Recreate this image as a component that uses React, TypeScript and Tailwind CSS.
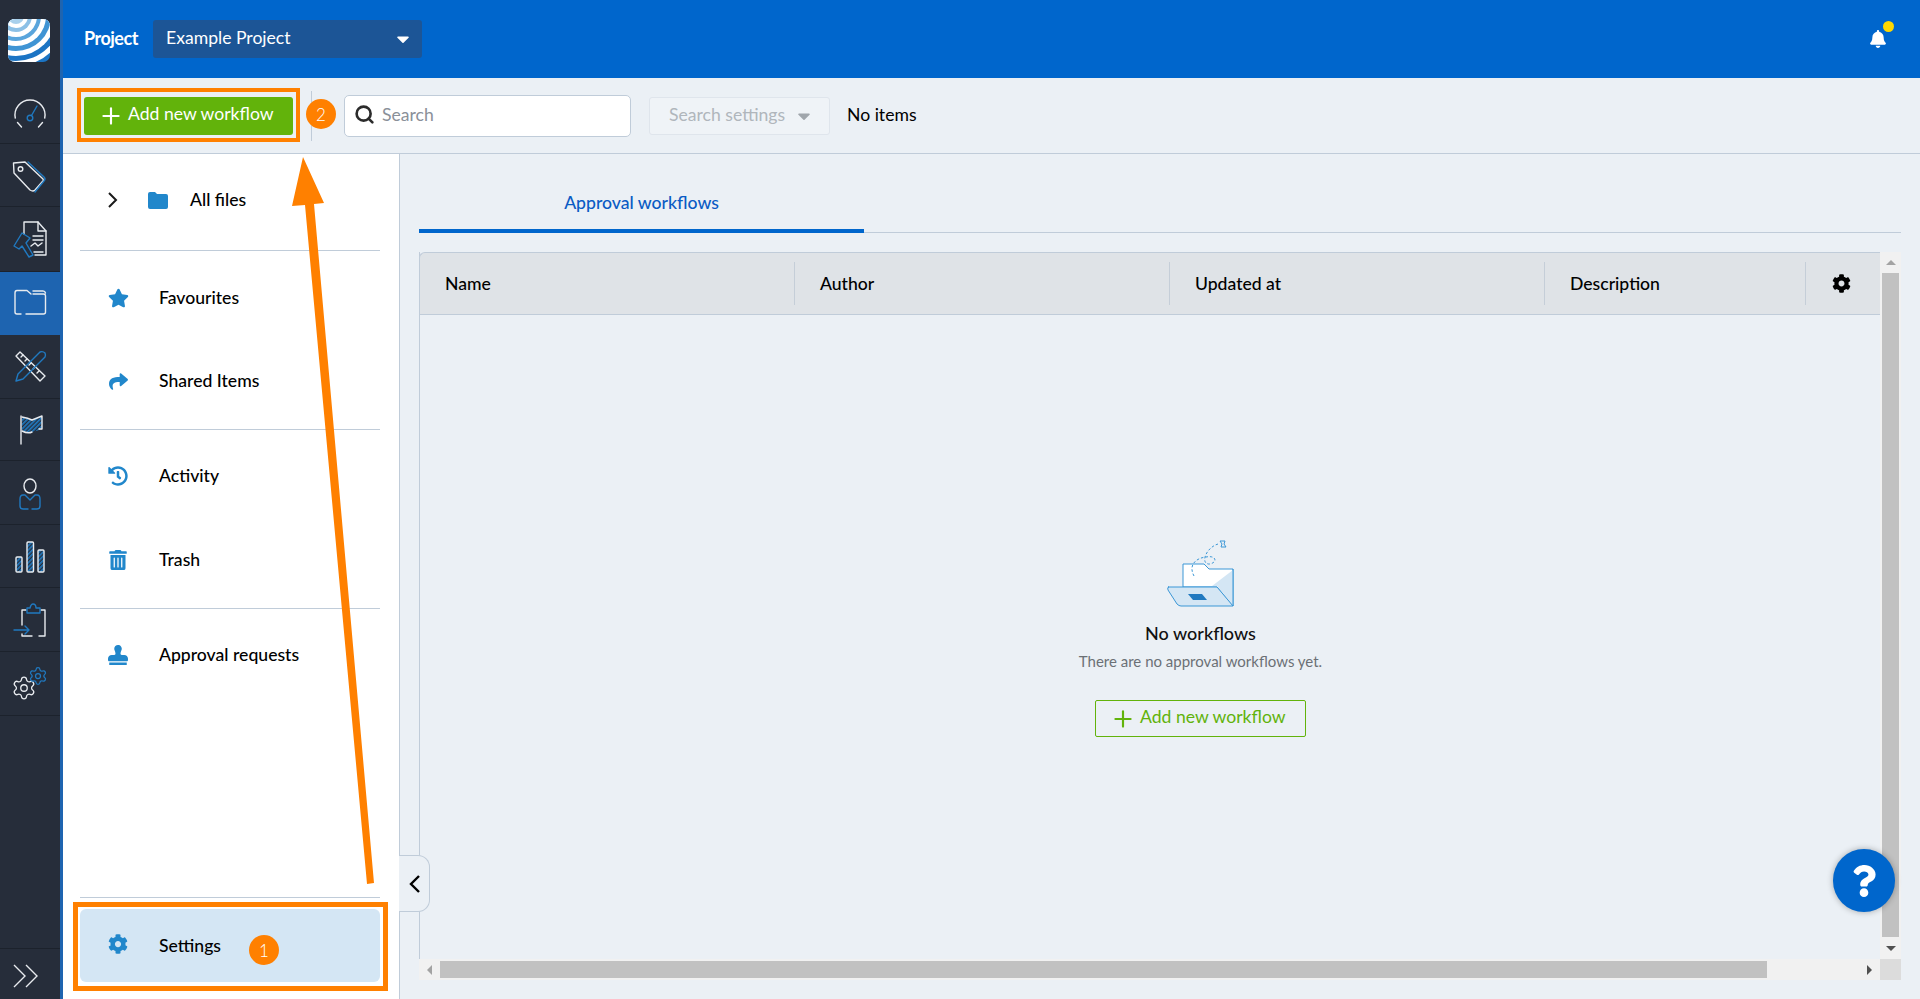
import React from "react";
import { Settings, Plus, Search } from "lucide-react";
import { FaStar, FaShare, FaHistory, FaTrashAlt, FaStamp, FaCog, FaBell, FaCaretDown, FaQuestion } from "react-icons/fa";

const W = "#e8ebef";
const B = "#2079c0";

function RailSvg({ y, h, children }: { y: number; h: number; children: React.ReactNode }) {
  return (
    <svg viewBox={`0 ${y} 60 ${h}`} className="w-[60px] block" style={{ height: h }} fill="none" strokeWidth="1.4" strokeLinecap="round" strokeLinejoin="round">
      {children}
    </svg>
  );
}

function RailItem({ y, h, active, children }: { y: number; h: number; active?: boolean; children: React.ReactNode }) {
  return (
    <div className={active ? "bg-[#1e64b0] border-b border-[#1e64b0]" : "border-b border-[#1c222c]"}>
      <RailSvg y={y} h={h - 1}>{children}</RailSvg>
    </div>
  );
}

function Rail() {
  return (
    <div className="w-[63px] h-full shrink-0 bg-[#262d3a] border-r-[3px] border-[#1e64b0] flex flex-col">
      <div className="h-[78px] flex pl-[8px] pt-[19px]">
        <svg viewBox="0 0 42 43" className="w-[42px] h-[43px]">
          <defs>
            <clipPath id="logo"><rect width="42" height="43" rx="7" /></clipPath>
          </defs>
          <g clipPath="url(#logo)">
            <rect width="42" height="43" fill="#1b74c4" />
            <circle cx="8" cy="-3" r="50" fill="#ffffff" />
            <circle cx="8" cy="-3" r="45" fill="#1b74c4" />
            <circle cx="8" cy="-3" r="40" fill="#ffffff" />
            <circle cx="8" cy="-3" r="35" fill="#3f94d4" />
            <circle cx="8" cy="-3" r="30" fill="#ffffff" />
            <circle cx="8" cy="-3" r="25" fill="#5aa5dc" />
            <circle cx="8" cy="-3" r="21" fill="#ffffff" />
            <circle cx="8" cy="-3" r="16" fill="#8cc0e6" />
            <circle cx="8" cy="-3" r="12" fill="#ffffff" />
            <circle cx="8" cy="-3" r="8" fill="#a8d0ec" />
          </g>
        </svg>
      </div>
      <RailItem y={78} h={66}>
        <path d="M15.3 118 A15 15 0 1 1 44.7 118" stroke={W} />
        <path d="M17.5 122.5 L21.5 127 M42.5 122.5 L38.5 127" stroke={W} />
        <circle cx="30" cy="118" r="2.8" stroke={B} />
        <path d="M31.5 115.5 L37 106" stroke={B} />
      </RailItem>
      <RailItem y={144} h={63}>
        <path d="M13.5 163 L25 162 L43 179 Q44 181 42 182 L35 190 Q33 192 30 190 L14 173 Z" stroke={W} />
        <circle cx="20.5" cy="169" r="2.3" stroke={W} />
        <path d="M28 162 L44 177 Q46 179 44 181 L35 192" stroke={B} />
      </RailItem>
      <RailItem y={207} h={65}>
        <path d="M24 234 V222 H38 L46 231 V255 H35" stroke={W} />
        <path d="M38 222 V231 H46 M33 236 H43 M33 240 H43 M34 252 H43" stroke={W} />
        <path d="M31 246 L35 243 L38 246 L42 243" stroke={W} />
        <path d="M14 246 L22 233 L30 238 L26 243 L33 255 L29 257 L22 246 L19 249 Z" stroke={B} />
      </RailItem>
      <RailItem y={272} h={63} active>
        <path d="M15 312 V293 Q15 290.5 17 290.5 H27 L31 294 M33 294 H43.5 Q45.5 294 45.5 296 V312 Q45.5 314 43.5 314 H26 M21 314 H17 Q15 314 15 312 M33 291 H43 Q45 291 45.5 293" stroke={W} />
      </RailItem>
      <RailItem y={335} h={64}>
        <path d="M20 352 L16 356 L40 381 L45 376 Z" stroke={W} />
        <path d="M21 357 l2 -2 M25 361 l2 -2 M29 365 l2 -2 M33 369 l2 -2 M37 373 l2 -2" stroke={W} />
        <path d="M16 381 L18 374 L40 352 Q43 351 45 353 Q46 355 45 357 L23 379 Z" stroke={B} />
      </RailItem>
      <RailItem y={399} h={62}>
        <defs>
          <pattern id="hatch" width="3" height="3" patternUnits="userSpaceOnUse" patternTransform="rotate(45)">
            <rect width="1.7" height="3" fill={B} />
          </pattern>
        </defs>
        <path d="M21 416 V444" stroke={W} />
        <path d="M22 417 Q28 418 32 420 Q37 418 42 416 V429 Q37 431 32 432 Q28 434 22 431 Z" fill="url(#hatch)" stroke="none" />
        <path d="M22 417 Q28 418 32 420 Q37 418 42 416 V429 H39 M22 431 Q28 434 32 432" stroke={W} />
      </RailItem>
      <RailItem y={461} h={64}>
        <ellipse cx="30" cy="486" rx="6" ry="7" stroke={W} />
        <path d="M25 495 H23 Q20 495 20 499 V506 Q20 509 23 509 H28 M32 509 H37 Q40 509 40 506 V499 Q40 495 37 495 H35 L30 500 L25 495" stroke={B} />
      </RailItem>
      <RailItem y={525} h={63}>
        <rect x="16" y="557" width="6" height="15" rx="1" fill="url(#hatch)" stroke={W} />
        <rect x="27" y="542" width="6.5" height="30" rx="1" fill="url(#hatch)" stroke={W} />
        <rect x="38" y="550" width="6" height="22" rx="1" fill="url(#hatch)" stroke={W} />
      </RailItem>
      <RailItem y={588} h={64}>
        <path d="M26 610 H22 V625 M22 634 V636 H32 M39 636 H45 V610 H41" stroke={W} />
        <path d="M27 613 V608 H30 Q31 604 33 604 Q36 604 36 608 H40 V613 Z" stroke={B} />
        <path d="M14 630 H29 M25 626 L29 630 L25 634" stroke={B} />
      </RailItem>
      <RailItem y={652} h={64}>
        <Settings x={11} y={675} width={26} height={26} stroke={W} strokeWidth={1.2} />
        <Settings x={28} y={666} width={20} height={20} stroke={B} strokeWidth={1.5} />
      </RailItem>
      <div className="flex-1 border-b border-[#1c222c]" />
      <div className="h-[50px] flex items-center pl-[13px] pt-[3px]">
        <svg viewBox="0 0 25 24" className="w-[25px] h-[24px]" fill="none" stroke={W} strokeWidth="1.4">
          <path d="M1 1 L12 12 L1 23 M13 1 L24 12 L13 23" />
        </svg>
      </div>
    </div>
  );
}

function TopBar() {
  return (
    <div className="h-[78px] bg-[#0066cc] flex items-center pl-[21px] pr-[34px] text-white shrink-0">
      <span className="text-[18px] font-bold tracking-[-0.5px] w-[69px] leading-none mb-[2px]">Project</span>
      <div className="w-[269px] h-[38px] bg-[#1c5596] rounded-[3px] flex items-center pl-[13px] pr-[9px] justify-between">
        <span className="text-[17.6px] leading-none mb-[2px]">Example Project</span>
        <FaCaretDown className="w-[20px] h-[20px] text-white" />
      </div>
      <div className="ml-auto relative w-[16px] h-[18px]">
        <FaBell className="w-[16px] h-[18px] text-white" />
        <span className="absolute -top-[9px] left-[13px] w-[11px] h-[11px] rounded-full bg-[#ffd800]" />
      </div>
    </div>
  );
}

function Toolbar() {
  return (
    <div className="h-[76px] bg-[#ebf0f5] border-b border-[#c0ccd9] flex items-center pl-[21px] shrink-0">
      <button className="w-[209px] h-[38px] bg-[#62b30b] rounded-[3px] flex items-center pl-[14px] gap-[4px] text-white text-[17.6px] leading-none">
        <Plus className="w-[26px] h-[26px]" strokeWidth={2} />
        <span className="mb-[3px]">Add new workflow</span>
      </button>
      <div className="ml-[18px] w-px h-[50px] bg-[#c0ccd9]" />
      <div className="ml-[32px] w-[287px] h-[42px] bg-white border border-[#c0ccd9] rounded-[5px] flex items-center pl-[9px] gap-[7px]">
        <Search className="w-[21px] h-[21px] text-[#2b2b2b] mb-[3px]" strokeWidth={3} />
        <span className="text-[17.6px] leading-none text-[#8a9099] mb-[1px]">Search</span>
      </div>
      <div className="ml-[18px] w-[181px] h-[38px] bg-[#eff3f7] border border-[#dfe5ec] rounded-[3px] flex items-center pl-[19px] gap-[9px]">
        <span className="text-[17.6px] leading-none text-[#b0b6bc] mb-[2px]">Search settings</span>
        <FaCaretDown className="w-[20px] h-[20px] text-[#a0a6ac]" />
      </div>
      <span className="ml-[17px] text-[17.6px] leading-none text-black mb-[2px]">No items</span>
    </div>
  );
}

function NavRow({ h, icon, label }: { h: number; icon: React.ReactNode; label: string }) {
  return (
    <div className="flex items-center pl-[45px]" style={{ height: h }}>
      <div className="w-[51px] flex text-[#2187cb]">{icon}</div>
      <span className="text-[17.6px] leading-none text-black font-medium">{label}</span>
    </div>
  );
}

function Panel() {
  return (
    <div className="w-[337px] h-full shrink-0 bg-white border-r border-[#c0ccd9] flex flex-col">
      <div className="h-[96px] flex items-center pl-[45px] pb-[4px]">
        <svg viewBox="0 0 10 16" className="w-[10px] h-[16px]" fill="none" stroke="#1a1a1a" strokeWidth="2">
          <path d="M1 1 L8 8 L1 15" />
        </svg>
        <svg viewBox="0 0 20 17" className="w-[20px] h-[17px] ml-[30px]" fill="#2187cb">
          <path d="M0 2 Q0 0 2 0 H7 L9 2 H18 Q20 2 20 4 V15 Q20 17 18 17 H2 Q0 17 0 15 Z" />
        </svg>
        <span className="ml-[22px] text-[17.6px] leading-none text-black font-medium">All files</span>
      </div>
      <div className="ml-[17px] mr-[19px] h-px bg-[#c0ccd9]" />
      <div className="h-[178px] pt-[5px] flex flex-col">
        <NavRow h={84} icon={<FaStar className="w-[21px] h-[20px]" />} label="Favourites" />
        <NavRow h={82} icon={<FaShare className="w-[21px] h-[19px]" />} label="Shared Items" />
      </div>
      <div className="ml-[17px] mr-[19px] h-px bg-[#c0ccd9]" />
      <div className="h-[178px] pt-[4px] flex flex-col">
        <NavRow h={84} icon={<FaHistory className="w-[20px] h-[20px]" />} label="Activity" />
        <NavRow h={84} icon={<FaTrashAlt className="w-[20px] h-[20px]" />} label="Trash" />
      </div>
      <div className="ml-[17px] mr-[19px] h-px bg-[#c0ccd9]" />
      <div className="pt-[4px]">
        <NavRow h={84} icon={<FaStamp className="w-[20px] h-[20px]" />} label="Approval requests" />
      </div>
      <div className="flex-1" />
      <div className="ml-[17px] mr-[19px] h-px bg-[#c0ccd9]" />
      <div className="ml-[17px] mr-[19px] mt-[11px] mb-[17px] h-[73px] bg-[#d4e6f4] rounded-[6px] flex items-center pl-[28px]">
        <div className="w-[51px] flex text-[#2187cb] mb-[4px]"><FaCog className="w-[20px] h-[20px]" /></div>
        <span className="text-[17.6px] leading-none text-black font-medium mt-[1px]">Settings</span>
      </div>
    </div>
  );
}

function Illustration() {
  return (
    <svg viewBox="1164 536 72 72" className="w-[72px] h-[72px]" fill="none" strokeLinejoin="round">
      <path d="M1182 587 V564 H1203 L1208 569 H1232 V606 L1216 587 Z" fill="#ffffff" stroke="#3b97d6" strokeWidth="1" />
      <path d="M1232 570 L1211 586 H1216 L1232 606 Z" fill="#d4e6f4" />
      <path d="M1232 569 V606" stroke="#3b97d6" strokeWidth="1" />
      <path d="M1167 587 H1216 L1232 606 H1180 Q1178 606 1176 604 L1167 590 Q1166 587 1168 587 Z" fill="#d4e6f4" stroke="#3b97d6" strokeWidth="1" />
      <path d="M1187 594 H1201 L1206 600 H1192 Z" fill="#2079c0" />
      <path d="M1193 576 C1187 565 1195 558 1205 557 C1215 555 1217 562 1209 564 C1199 565 1204 548 1217 544" stroke="#3b97d6" strokeWidth="1" strokeDasharray="2.5 2" />
      <path d="M1219 541 L1224 541 L1223 544 L1225 547 L1220 547 L1221 544 Z" stroke="#3b97d6" strokeWidth="1" />
    </svg>
  );
}

function Table() {
  const cols = [
    { w: 375, label: "Name" },
    { w: 375, label: "Author" },
    { w: 375, label: "Updated at" },
    { w: 261, label: "Description" },
  ];
  return (
    <div className="ml-[19px] mt-[19px] w-[1482px] h-[728px] flex flex-col">
      <div className="flex-1 flex min-h-0">
        <div className="w-[1461px] flex flex-col border-l border-[#c0ccd9]">
          <div className="h-[63px] bg-[#dfe3e7] border-t border-b border-[#c0ccd9] rounded-tl-[6px] -ml-px border-l flex items-center shrink-0">
            {cols.map((c) => (
              <div key={c.label} className="flex items-center h-[43px] pl-[25px] border-r border-[#c5ced8] text-[17.6px] leading-none text-black font-medium" style={{ width: c.w }}>
                <span>{c.label}</span>
              </div>
            ))}
            <div className="flex-1 flex justify-center pr-[4px]">
              <FaCog className="w-[19px] h-[19px] text-black" />
            </div>
          </div>
          <div className="flex-1 flex flex-col items-center pl-[101px] pt-[221px]">
            <Illustration />
            <div className="mt-[16px] text-[18px] leading-none font-medium text-[#111]">No workflows</div>
            <div className="mt-[12px] text-[15px] leading-none text-[#6b7075]">There are no approval workflows yet.</div>
            <div className="mt-[31px] w-[211px] h-[37px] border border-[#62b30b] rounded-[2px] flex items-center pl-[14px] gap-[4px] text-[#62b30b] text-[17.6px] leading-none">
              <Plus className="w-[26px] h-[26px]" strokeWidth={2} />
              <span className="mb-[3px]">Add new workflow</span>
            </div>
          </div>
        </div>
        <div className="w-[21px] bg-[#f1f1f1] flex flex-col items-center">
          <div className="h-[21px] flex items-center justify-center">
            <div className="w-0 h-0 border-x-[5px] border-x-transparent border-b-[5px] border-b-[#a3a3a3]" />
          </div>
          <div className="flex-1 w-[17px] bg-[#c1c1c1]" />
          <div className="h-[22px] flex items-center justify-center">
            <div className="w-0 h-0 border-x-[5px] border-x-transparent border-t-[5px] border-t-[#505050]" />
          </div>
        </div>
      </div>
      <div className="h-[21px] flex shrink-0">
        <div className="w-[1461px] bg-[#f1f1f1] flex items-center">
          <div className="w-[21px] flex justify-center">
            <div className="w-0 h-0 border-y-[5px] border-y-transparent border-r-[5px] border-r-[#a3a3a3]" />
          </div>
          <div className="w-[1327px] h-[17px] bg-[#c1c1c1]" />
          <div className="ml-auto w-[21px] flex justify-center">
            <div className="w-0 h-0 border-y-[5px] border-y-transparent border-l-[5px] border-l-[#505050]" />
          </div>
        </div>
        <div className="w-[21px] bg-[#dcdcdc]" />
      </div>
    </div>
  );
}

function Main() {
  return (
    <div className="flex-1 h-full bg-[#ebf0f5] relative">
      <div className="ml-[19px] w-[1482px] h-[79px] border-b border-[#c0ccd9]">
        <div className="w-[445px] h-[79px] border-b-4 border-[#0066cc] flex items-center justify-center pt-[22px]">
          <span className="text-[17.6px] leading-none font-medium text-[#0a5bc4]">Approval workflows</span>
        </div>
      </div>
      <Table />
      <div className="absolute left-[-1px] top-[701px] w-[31px] h-[57px] bg-[#ebf0f5] border border-[#c0ccd9] border-l-0 rounded-r-[12px] flex items-center justify-center">
        <svg viewBox="0 0 11 18" className="w-[11px] h-[18px]" fill="none" stroke="#000000" strokeWidth="2.4">
          <path d="M10 1 L2 9 L10 17" />
        </svg>
      </div>
      <div className="absolute left-[1433px] top-[695px] w-[62px] h-[63px] rounded-full bg-[#0066cc] shadow-[0_0_6px_rgba(0,0,0,0.3)] flex items-center justify-center">
        <FaQuestion className="w-[26px] h-[32px] text-white" />
      </div>
    </div>
  );
}

function Annotations() {
  return (
    <>
      <div className="absolute left-[77px] top-[88px] w-[223px] h-[54px] border-4 border-[#ff8000]" />
      <div className="absolute left-[73px] top-[902px] w-[315px] h-[89px] border-[5px] border-[#ff8000]" />
      <div className="absolute left-[306px] top-[99px] w-[30px] h-[30px] rounded-full bg-[#ff8000] flex items-center justify-center text-white text-[17px] leading-none font-light">2</div>
      <div className="absolute left-[249px] top-[935px] w-[30px] h-[30px] rounded-full bg-[#ff8000] flex items-center justify-center text-white text-[17px] leading-none font-light">1</div>
      <svg className="absolute left-0 top-0 w-[1920px] h-[999px] pointer-events-none" viewBox="0 0 1920 999">
        <polygon points="303,157 324,203 314,204 374,883 367,884 305,205 292,206" fill="#ff8000" />
      </svg>
    </>
  );
}

export default function App() {
  return (
    <div className="relative w-[1920px] h-[999px] overflow-hidden flex bg-white" style={{ fontFamily: "Lato, 'Noto Sans', sans-serif" }}>
      <Rail />
      <div className="flex-1 flex flex-col h-full min-w-0">
        <TopBar />
        <Toolbar />
        <div className="flex-1 flex min-h-0">
          <Panel />
          <Main />
        </div>
      </div>
      <Annotations />
    </div>
  );
}
